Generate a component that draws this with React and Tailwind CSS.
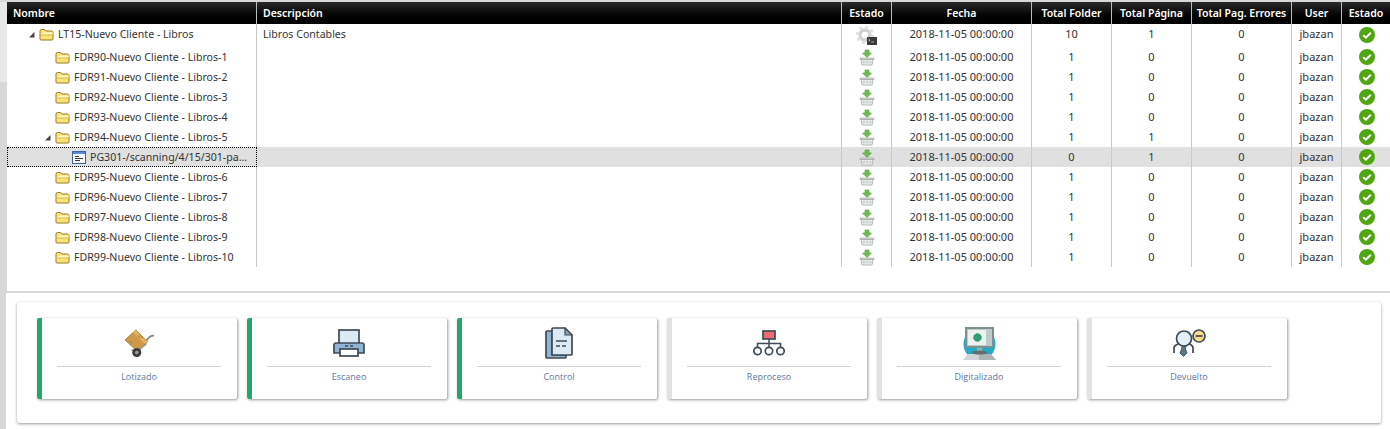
const COLUMNS = [
  { key: 'estado', label: 'Estado', width: 'w-[50px]' },
  { key: 'fecha', label: 'Fecha', width: 'w-[140px]' },
  { key: 'folders', label: 'Total Folder', width: 'w-[80px]' },
  { key: 'pages', label: 'Total Página', width: 'w-[80px]' },
  { key: 'errors', label: 'Total Pag. Errores', width: 'w-[100px]' },
  { key: 'user', label: 'User', width: 'w-[50px]' },
  { key: 'ok', label: 'Estado', width: 'w-[48px]' },
]

const ROWS = [
  { name: 'LT15-Nuevo Cliente - Libros', desc: 'Libros Contables', depth: 0, open: true, folders: 10, pages: 1, gear: true, root: true },
  { name: 'FDR90-Nuevo Cliente - Libros-1', depth: 1, folders: 1, pages: 0 },
  { name: 'FDR91-Nuevo Cliente - Libros-2', depth: 1, folders: 1, pages: 0 },
  { name: 'FDR92-Nuevo Cliente - Libros-3', depth: 1, folders: 1, pages: 0 },
  { name: 'FDR93-Nuevo Cliente - Libros-4', depth: 1, folders: 1, pages: 0 },
  { name: 'FDR94-Nuevo Cliente - Libros-5', depth: 1, open: true, folders: 1, pages: 1 },
  { name: 'PG301-/scanning/4/15/301-pa...', depth: 2, page: true, selected: true, folders: 0, pages: 1 },
  { name: 'FDR95-Nuevo Cliente - Libros-6', depth: 1, folders: 1, pages: 0 },
  { name: 'FDR96-Nuevo Cliente - Libros-7', depth: 1, folders: 1, pages: 0 },
  { name: 'FDR97-Nuevo Cliente - Libros-8', depth: 1, folders: 1, pages: 0 },
  { name: 'FDR98-Nuevo Cliente - Libros-9', depth: 1, folders: 1, pages: 0 },
  { name: 'FDR99-Nuevo Cliente - Libros-10', depth: 1, folders: 1, pages: 0 },
]

const INDENT = ['pl-[22px]', 'pl-[38px]', 'pl-[54px]']

const FolderIcon = () => (
  <svg width="15" height="13" viewBox="0 0 15 13" className="shrink-0">
    <path d="M1 11V3a1.5 1.5 0 0 1 1.5-1.5h3L7 3h5.5A1.5 1.5 0 0 1 14 4.5V11a1 1 0 0 1-1 1H2a1 1 0 0 1-1-1z" fill="#fbe27c" stroke="#9a7a22" />
    <path d="M1.500 6.500C3 5 5 4.600 7 4.600h6.600V6.500z" fill="#fff8d0" />
    <path d="M1.500 7h12" stroke="#e0b83e" />
  </svg>
)

const PageIcon = () => (
  <svg width="14" height="13" viewBox="0 0 14 13" className="shrink-0">
    <rect x="0.5" y="0.5" width="13" height="12" fill="#fff" stroke="#3d63a8" />
    <rect x="1" y="1" width="12" height="2" fill="#5b88d0" />
    <path d="M3 5.500h4M3 7.500h8M3 9.500h5" stroke="#333" />
  </svg>
)

const BasketIcon = () => (
  <svg width="16" height="17" viewBox="0 0 16 17">
    <path d="M6 1h4v3h2.500L8 8.500 3.500 4H6z" fill="#74bb58" stroke="#4f9a3e" strokeWidth="0.6" />
    <path d="M1 9h14v1.500H1z" fill="#d8dfd8" stroke="#98a298" strokeWidth="0.6" />
    <path d="M2 10.500h12l-1 5.500H3z" fill="#f6f8f6" stroke="#98a298" strokeWidth="0.7" />
    <path d="M5 11v4.500M8 11v4.500M11 11v4.500M2.500 13h11" stroke="#b4bcb4" strokeWidth="0.7" />
  </svg>
)

const GearIcon = () => (
  <svg width="21" height="19" viewBox="0 0 21 19">
    <circle cx="9" cy="9" r="5" fill="#fff" stroke="#d2d2d2" strokeWidth="3.500" />
    <circle cx="9" cy="9" r="8" fill="none" stroke="#dcdcdc" strokeWidth="2" strokeDasharray="3 3.300" />
    <rect x="11" y="11" width="10" height="8" fill="#3a3a3a" />
    <path d="M12.500 13l1.500 1.200-1.500 1.200" stroke="#fff" strokeWidth="0.7" fill="none" />
    <path d="M15 16h3" stroke="#ddd" strokeWidth="0.7" />
  </svg>
)

const CheckIcon = () => (
  <svg width="16" height="16" viewBox="0 0 16 16">
    <circle cx="8" cy="8" r="8" fill="#4fa512" />
    <path d="M4.300 8.200l2.600 2.500 4.900-5" stroke="#fff" strokeWidth="2" fill="none" />
  </svg>
)

const Triangle = () => (
  <svg width="6" height="6" viewBox="0 0 6 6" className="absolute left-0 top-[1px]">
    <path d="M0 5.500L5.500 0v5.500z" fill="#444" />
  </svg>
)

const CartIcon = () => (
  <svg width="31" height="29" viewBox="0 0 34 32">
    <path d="M22 15l7-7 4-1" stroke="#8a8a8a" strokeWidth="2" fill="none" />
    <path d="M8 23l6 3 11-10" stroke="#a4a4a4" strokeWidth="1.500" fill="none" />
    <path d="M13 1l13 13-12 10L1 12z" fill="#cf9a46" stroke="#8f6a2c" strokeWidth="0.8" />
    <path d="M13 1l13 13-3 2.500L10 3.500z" fill="#dfb264" />
    <path d="M17 6l4 4M15 7l3 3M6 13l3 3" stroke="#7c5a24" strokeWidth="0.7" />
    <circle cx="14" cy="26" r="5" fill="#3c3c3c" />
    <circle cx="14" cy="26" r="2" fill="#9a9a9a" />
  </svg>
)

const PrinterIcon = () => (
  <svg width="32" height="28" viewBox="0 0 32 28">
    <rect x="6" y="1" width="20" height="16" fill="#dceaf5" stroke="#3f4a54" strokeWidth="1.700" />
    <path d="M3 14h26a2 2 0 0 1 2 2v8H1v-8a2 2 0 0 1 2-2z" fill="#90b4d4" stroke="#3f4a54" strokeWidth="1.700" />
    <rect x="7" y="20" width="18" height="7" fill="#fff" stroke="#3f4a54" strokeWidth="1.700" />
    <path d="M12 17h3M17 17h3" stroke="#3f4a54" strokeWidth="1.500" />
  </svg>
)

const DocsIcon = () => (
  <svg width="28" height="32" viewBox="0 0 28 32">
    <path d="M7 4H2a1 1 0 0 0-1 1v25a1 1 0 0 0 1 1h18a1 1 0 0 0 1-1v-2H7z" fill="#90b4d4" stroke="#3f4a54" strokeWidth="1.700" />
    <path d="M7 2a1 1 0 0 1 1-1h12l7 7v19a1 1 0 0 1-1 1H8a1 1 0 0 1-1-1z" fill="#dceaf5" stroke="#3f4a54" strokeWidth="1.700" />
    <path d="M20 1v7h7z" fill="#90a4b8" stroke="#3f4a54" strokeWidth="1.200" />
    <path d="M11 14h11M11 19h4M17 19h4" stroke="#3f4a54" strokeWidth="1.500" />
  </svg>
)

const TreeIcon = () => (
  <svg width="32" height="26" viewBox="0 0 32 26">
    <rect x="10" y="1" width="12" height="8" fill="#ee6a74" stroke="#3f4a54" strokeWidth="1.700" />
    <path d="M16 9v9M4.500 18v-4.500h23V18" stroke="#3f4a54" strokeWidth="1.500" fill="none" />
    <circle cx="4.500" cy="21" r="3.700" fill="#fff" stroke="#3f4a54" strokeWidth="1.700" />
    <circle cx="16" cy="21" r="3.700" fill="#fff" stroke="#3f4a54" strokeWidth="1.700" />
    <circle cx="27.500" cy="21" r="3.700" fill="#fff" stroke="#3f4a54" strokeWidth="1.700" />
  </svg>
)

const MonitorIcon = () => (
  <svg width="33" height="33" viewBox="0 0 33 33">
    <circle cx="16.500" cy="17" r="16" fill="#22aac8" />
    <path d="M0 33l5-6h23l5 6z" fill="#d0d4d4" />
    <path d="M16 27h12l5 6H16z" fill="#aeb4b4" />
    <rect x="2" y="0" width="29" height="21" fill="#7c9090" />
    <rect x="4" y="2" width="25" height="17" fill="#bccac8" />
    <rect x="5" y="3" width="18" height="15" fill="#eef2ee" />
    <path d="M11 8l3-2 3 1 2 3-1 3-3 2-3-1-2-3z" fill="#2fa074" />
    <rect x="14" y="21" width="5" height="4" fill="#9fb0b0" />
    <ellipse cx="16.500" cy="25.500" rx="8" ry="2" fill="#5f7070" />
  </svg>
)

const UserMinusIcon = () => (
  <svg width="33" height="28" viewBox="0 0 33 28">
    <circle cx="11" cy="9.500" r="7.500" fill="#e4f0f8" stroke="#3f4a54" strokeWidth="1.700" />
    <path d="M1 24v-5c0-2 1.500-3 4-4M20 24v-5c0-2-1-3-3.500-4" stroke="#3f4a54" strokeWidth="1.700" fill="none" />
    <path d="M9 17h4l-.5 3 1.500 4-3.500 3.500L7 24l1.500-4z" fill="#5a7488" stroke="#3f4a54" strokeWidth="0.8" />
    <circle cx="26" cy="7" r="6" fill="#f8dc8c" stroke="#3f4a54" strokeWidth="1.700" />
    <path d="M22.500 7h7" stroke="#3f4a54" strokeWidth="1.700" />
  </svg>
)

const STEPS = [
  { label: 'Lotizado', icon: <CartIcon />, done: true },
  { label: 'Escaneo', icon: <PrinterIcon />, done: true },
  { label: 'Control', icon: <DocsIcon />, done: true },
  { label: 'Reproceso', icon: <TreeIcon />, done: false },
  { label: 'Digitalizado', icon: <MonitorIcon />, done: false },
  { label: 'Devuelto', icon: <UserMinusIcon />, done: false },
]

function TreeRow({ row }) {
  // the first row is taller and its text sits above the middle
  const textPad = row.root ? 'pb-[3px]' : ''
  const iconPad = row.root ? 'pb-[1px]' : ''
  return (
    <div className={`flex text-[#333] ${row.root ? 'h-[23px]' : 'h-[20px]'} ${row.selected ? 'bg-[#e0e0e0]' : ''}`}>
      <div className={`flex w-[250px] items-center gap-[4px] text-[10.6px] ${INDENT[row.depth]} ${textPad} ${row.selected ? 'border border-dotted border-black' : 'border-r border-[#c8c8c8]'}`}>
        <span className="relative h-[7px] w-[6px] shrink-0">{row.open && <Triangle />}</span>
        {row.page ? <PageIcon /> : <FolderIcon />}
        <span className="truncate">{row.name}</span>
      </div>
      <div className={`flex w-[585px] items-center border-r border-[#c8c8c8] pl-[6px] text-[10.6px] ${textPad}`}>{row.desc}</div>
      <div className={`flex w-[50px] items-center justify-center border-r border-[#c8c8c8] ${iconPad}`}>
        {row.gear ? <GearIcon /> : <BasketIcon />}
      </div>
      <div className={`flex w-[140px] items-center justify-center border-r border-[#c8c8c8] ${textPad}`}>2018-11-05 00:00:00</div>
      <div className={`flex w-[80px] items-center justify-center border-r border-[#c8c8c8] ${textPad}`}>{row.folders}</div>
      <div className={`flex w-[80px] items-center justify-center border-r border-[#c8c8c8] ${textPad}`}>{row.pages}</div>
      <div className={`flex w-[100px] items-center justify-center border-r border-[#c8c8c8] ${textPad}`}>0</div>
      <div className={`flex w-[50px] items-center justify-center border-r border-[#c8c8c8] ${textPad}`}>jbazan</div>
      <div className={`flex w-[48px] items-center justify-center pl-[2px] ${iconPad}`}><CheckIcon /></div>
    </div>
  )
}

function StepCard({ step }) {
  return (
    <div className={`flex h-[81px] w-[200px] flex-col rounded-[2px] border-l-[5px] bg-white pl-[15px] pr-[16px] shadow-[1px_1px_3px_rgba(0,0,0,0.4)] ${step.done ? 'border-[#22a86c]' : 'border-[#e2e2e2]'}`}>
      <div className="flex h-[49px] shrink-0 items-center justify-center border-b border-[#cfd3d8] pt-[2px]">{step.icon}</div>
      <div className="pt-[4px] text-center font-['Open_Sans',sans-serif] text-[9px] leading-[12px] text-[#64789a]">{step.label}</div>
    </div>
  )
}

export default function App() {
  return (
    <div className="relative flex h-[429px] w-[1390px] flex-col overflow-hidden bg-[#d8d8d8] pl-[7px] pt-[2px] font-['Noto_Sans',sans-serif] text-[11px] leading-[14px]">
      {/* lighter part of the left edge */}
      <div className="absolute left-0 top-[2px] h-[80px] w-[7px] bg-[#e8e8e8]" />
      <div className="h-[289px] shrink-0 bg-white">
        <div className="flex h-[22px] whitespace-nowrap bg-gradient-to-b from-[#2a2a2a] to-black text-[10.5px] font-semibold text-white">
          <div className="flex w-[250px] items-center border-r border-[#bbb] pl-[6px]">Nombre</div>
          <div className="flex w-[585px] items-center border-r border-[#bbb] pl-[6px]">Descripción</div>
          {COLUMNS.map((col, i) => (
            <div key={col.key} className={`flex items-center justify-center ${col.width} ${i < COLUMNS.length - 1 ? 'border-r border-[#bbb]' : ''}`}>
              {col.label}
            </div>
          ))}
        </div>
        {ROWS.map(row => <TreeRow key={row.name} row={row} />)}
      </div>
      <div className="-ml-px mt-[2px] flex-1 bg-white pl-[11px] pr-[9px] pt-[9px]">
        <div className="flex h-[121px] gap-[10px] rounded-[3px] bg-white pl-[20px] pt-[16px] shadow-[0_1px_3px_rgba(0,0,0,0.4)]">
          {STEPS.map(step => <StepCard key={step.label} step={step} />)}
        </div>
      </div>
    </div>
  )
}
